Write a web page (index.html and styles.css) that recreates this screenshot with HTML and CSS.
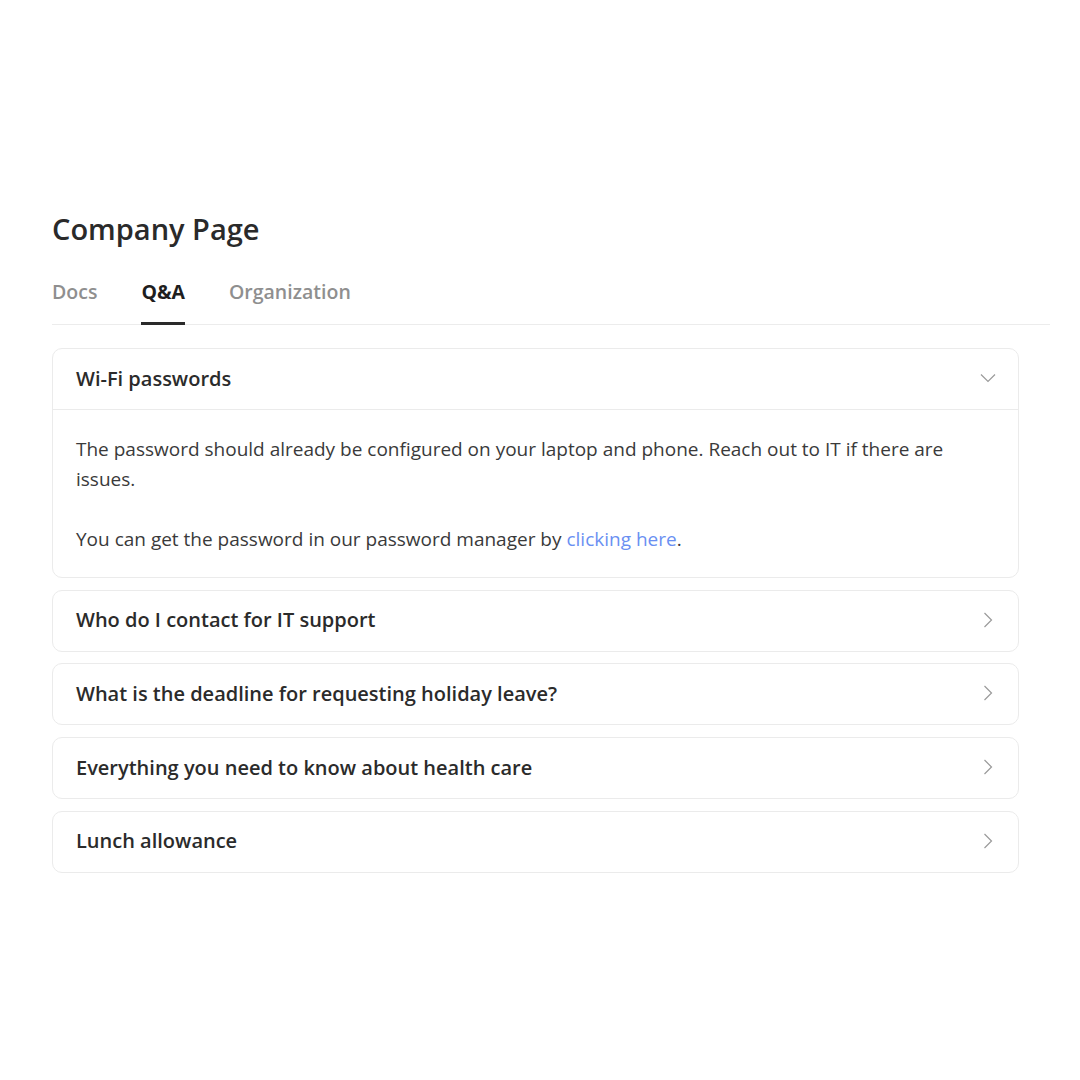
FILE: index.html
```html
<!DOCTYPE html>
<html lang="en">
<head>
<meta charset="utf-8">
<title>Company Page</title>
<link rel="stylesheet" href="styles.css">
</head>
<body>
<main class="page">
  <h1 class="title">Company Page</h1>
  <nav class="tabs">
    <span class="tab">Docs</span>
    <span class="tab active">Q&amp;A</span>
    <span class="tab">Organization</span>
  </nav>
  <section class="faq">
    <div class="card open">
      <div class="card-head">
        <span class="q">Wi-Fi passwords</span>
        <svg class="chev down" width="16" height="10" viewBox="0 0 16 10"><path d="M1 1.5 L8 8.5 L15 1.5" fill="none" stroke="#9a9a9a" stroke-width="1.2"/></svg>
      </div>
      <div class="card-body">
        <p>The password should already be configured on your laptop and phone. Reach out to IT if there are issues.</p>
        <p>You can get the password in our password manager by <a class="link" href="#">clicking here</a>.</p>
      </div>
    </div>
    <div class="card">
      <div class="card-head">
        <span class="q">Who do I contact for IT support</span>
        <svg class="chev" width="10" height="16" viewBox="0 0 10 16"><path d="M1.5 1 L8.5 8 L1.5 15" fill="none" stroke="#9a9a9a" stroke-width="1.2"/></svg>
      </div>
    </div>
    <div class="card">
      <div class="card-head">
        <span class="q">What is the deadline for requesting holiday leave?</span>
        <svg class="chev" width="10" height="16" viewBox="0 0 10 16"><path d="M1.5 1 L8.5 8 L1.5 15" fill="none" stroke="#9a9a9a" stroke-width="1.2"/></svg>
      </div>
    </div>
    <div class="card">
      <div class="card-head">
        <span class="q">Everything you need to know about health care</span>
        <svg class="chev" width="10" height="16" viewBox="0 0 10 16"><path d="M1.5 1 L8.5 8 L1.5 15" fill="none" stroke="#9a9a9a" stroke-width="1.2"/></svg>
      </div>
    </div>
    <div class="card">
      <div class="card-head">
        <span class="q">Lunch allowance</span>
        <svg class="chev" width="10" height="16" viewBox="0 0 10 16"><path d="M1.5 1 L8.5 8 L1.5 15" fill="none" stroke="#9a9a9a" stroke-width="1.2"/></svg>
      </div>
    </div>
  </section>
</main>
</body>
</html>
```
FILE: styles.css
```css
* { box-sizing: border-box; }
html, body { margin: 0; padding: 0; background: #fff; }
body {
  font-family: "Open Sans", "Noto Sans", "Liberation Sans", sans-serif;
  color: #2b2b2b;
}
.page {
  padding: 211px 30px 0 52px;
}
.title {
  margin: 0;
  font-size: 29px;
  font-weight: 600;
  line-height: 36px;
  color: #2a2a2a;
}
.tabs {
  margin-top: 33px;
  display: flex;
  gap: 44px;
  border-bottom: 1px solid #ececec;
}
.tab {
  font-size: 19.5px;
  font-weight: 600;
  color: #8f8f8f;
  padding-bottom: 18px;
  line-height: 24px;
  border-bottom: 3px solid transparent;
  margin-bottom: -1px;
}
.tab.active {
  color: #1e1e1e;
  font-weight: 700;
  border-bottom-color: #2a2a2a;
}
.faq {
  margin-top: 23px;
  width: 967px;
  display: flex;
  flex-direction: column;
  gap: 11.7px;
}
.card {
  border: 1px solid #ebebeb;
  border-radius: 10px;
  background: #fff;
}
.card-head {
  height: 60px;
  display: flex;
  align-items: center;
  justify-content: space-between;
  padding: 0 25px 2px 23px;
}
.open .card-head {
  height: 61px;
  padding-right: 22px;
  border-bottom: 1px solid #ebebeb;
}
.q {
  font-size: 20px;
  font-weight: 600;
  color: #2b2b2b;
}
.chev { display: block; }
.card-body {
  padding: 24px 50px 23px 23px;
}
.card-body p {
  margin: 0;
  font-size: 19px;
  line-height: 30px;
  color: #3a3a3a;
}
.card-body p + p { margin-top: 30px; }
.link {
  color: #6a8ff2;
  text-decoration: none;
}
```
